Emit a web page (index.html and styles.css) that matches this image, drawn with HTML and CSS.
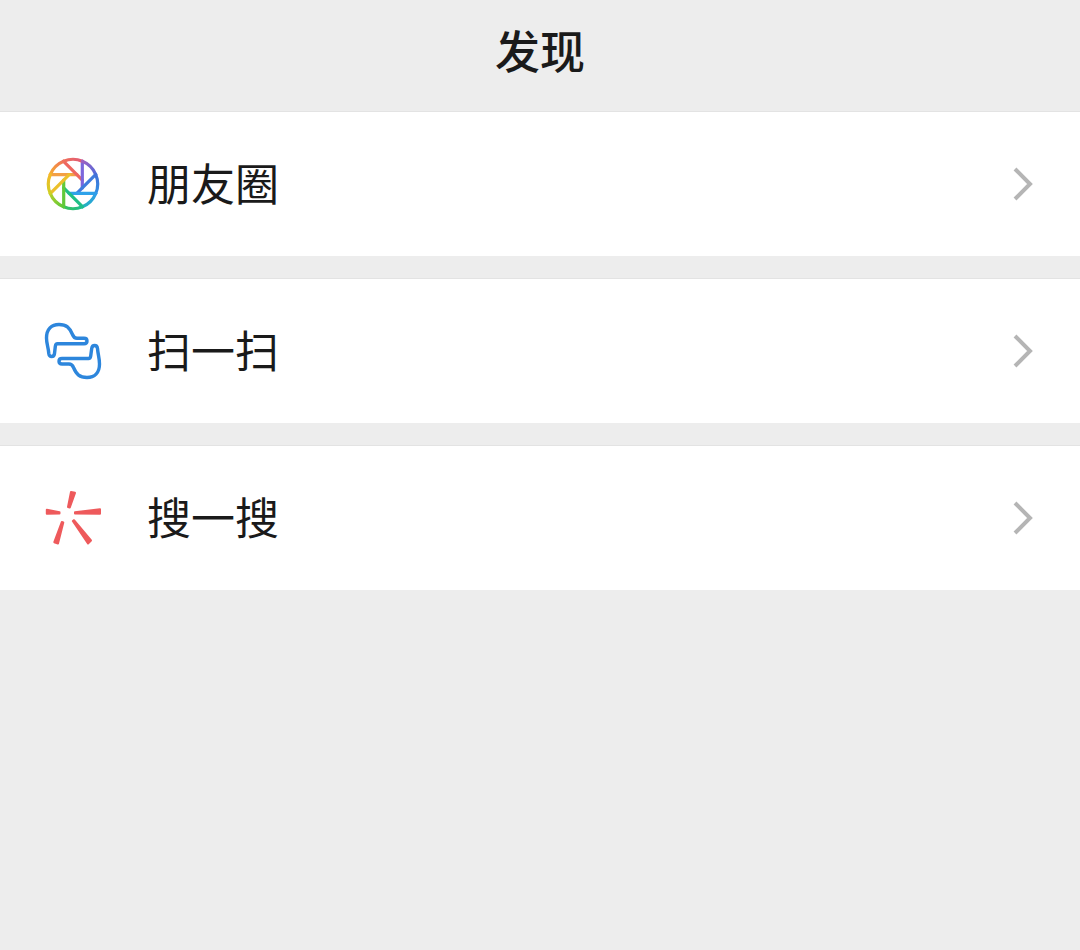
FILE: index.html
```html
<!doctype html>
<html lang="zh-CN">
<head>
    <meta charset="utf-8">
    <meta name="viewport" content="width=device-width">
    <title>发现</title>
    <link rel="stylesheet" href="styles.css">
</head>
<body>
    <header class="title_bar">
        <h1>发现</h1>
    </header>

    <main class="menu">
        <a class="item" href="#moments">
            <svg class="icon" viewBox="-35 -35 70 70" aria-hidden="true">
                <defs>
                    <linearGradient id="g0" gradientUnits="userSpaceOnUse" x1="-23" y1="-9" x2="-9" y2="-23"><stop stop-color="#f5b02e"/><stop offset="1" stop-color="#f0705a"/></linearGradient>
                    <linearGradient id="g1" gradientUnits="userSpaceOnUse" x1="-23" y1="-9" x2="-9" y2="-23"><stop stop-color="#f0705a"/><stop offset="1" stop-color="#e05a78"/></linearGradient>
                    <linearGradient id="g2" gradientUnits="userSpaceOnUse" x1="-23" y1="-9" x2="-9" y2="-23"><stop stop-color="#a060c0"/><stop offset="1" stop-color="#4f6cdc"/></linearGradient>
                    <linearGradient id="g3" gradientUnits="userSpaceOnUse" x1="-23" y1="-9" x2="-9" y2="-23"><stop stop-color="#4470d6"/><stop offset="1" stop-color="#2f90e4"/></linearGradient>
                    <linearGradient id="g4" gradientUnits="userSpaceOnUse" x1="-23" y1="-9" x2="-9" y2="-23"><stop stop-color="#2f9cec"/><stop offset="1" stop-color="#22b4b8"/></linearGradient>
                    <linearGradient id="g5" gradientUnits="userSpaceOnUse" x1="-23" y1="-9" x2="-9" y2="-23"><stop stop-color="#1cbc90"/><stop offset="1" stop-color="#3cc258"/></linearGradient>
                    <linearGradient id="g6" gradientUnits="userSpaceOnUse" x1="-23" y1="-9" x2="-9" y2="-23"><stop stop-color="#58c838"/><stop offset="1" stop-color="#b8d02a"/></linearGradient>
                    <linearGradient id="g7" gradientUnits="userSpaceOnUse" x1="-23" y1="-9" x2="-9" y2="-23"><stop stop-color="#cfd024"/><stop offset="1" stop-color="#f5b82a"/></linearGradient>
                    <path id="arc" d="M-22.8 -9.4A24.6 24.6 0 0 1 -9.4 -22.8"/>
                    <path id="blade" d="M-22.6 -9.3H3.9"/>
                </defs>
                <g fill="none" stroke-width="3.2" stroke-linecap="round">
                    <use href="#blade" stroke="#f3a045"/>
                    <use href="#blade" stroke="#ee6660" transform="rotate(45)"/>
                    <use href="#blade" stroke="#7b66dc" transform="rotate(90)"/>
                    <use href="#blade" stroke="#3f7cdc" transform="rotate(135)"/>
                    <use href="#blade" stroke="#2ea2ea" transform="rotate(180)"/>
                    <use href="#blade" stroke="#20bf86" transform="rotate(225)"/>
                    <use href="#blade" stroke="#62c93a" transform="rotate(270)"/>
                    <use href="#blade" stroke="#ecc02c" transform="rotate(315)"/>
                    <use href="#arc" stroke="url(#g0)"/>
                    <use href="#arc" stroke="url(#g1)" transform="rotate(45)"/>
                    <use href="#arc" stroke="url(#g2)" transform="rotate(90)"/>
                    <use href="#arc" stroke="url(#g3)" transform="rotate(135)"/>
                    <use href="#arc" stroke="url(#g4)" transform="rotate(180)"/>
                    <use href="#arc" stroke="url(#g5)" transform="rotate(225)"/>
                    <use href="#arc" stroke="url(#g6)" transform="rotate(270)"/>
                    <use href="#arc" stroke="url(#g7)" transform="rotate(315)"/>
                </g>
            </svg>
            <span class="label">朋友圈</span>
            <svg class="arrow" viewBox="0 0 20 36" aria-hidden="true"><path d="M2 3L17 18L2 33"/></svg>
        </a>

        <a class="item" href="#scan">
            <svg class="icon scan" viewBox="0 0 70 70" aria-hidden="true">
                <path d="M10.800 37.500C10.300 31 8.500 28 8.500 22C8.500 13 13.500 8.500 21 8.500C28.500 8.500 31.500 11.500 34.500 18.500C35.500 21 36.500 22.300 39 22.300H46C50 22.300 50 27.800 46 27.800H19.500C18 27.800 17.500 29 17.300 30.500L16.500 37.500C16 41.500 11.300 41.500 10.800 37.500Z"/>
                <path d="M59.500 32.500C60 39 61.500 42 61.500 48C61.500 57 56.500 61.500 49 61.500C41.500 61.500 38.500 58.500 35.500 51.500C34.500 49 33.500 48 31 48H24C20 48 20 42.500 24 42.500H50.500C52 42.500 52.500 41.500 52.700 40L53.700 32.500C54.300 28.500 59 28.500 59.500 32.500Z"/>
            </svg>
            <span class="label">扫一扫</span>
            <svg class="arrow" viewBox="0 0 20 36" aria-hidden="true"><path d="M2 3L17 18L2 33"/></svg>
        </a>

        <a class="item" href="#search">
            <svg class="icon search" viewBox="0 -1 70 70" aria-hidden="true">
                <path d="M33 8L37 8.800L31.800 23.500L30 23Z"/>
                <path d="M8.800 25.800V29.800L21.500 29.600V28.200Z"/>
                <path d="M62 25.200V29.800L37 29.600V28.200Z"/>
                <path d="M23.800 38L25.300 38.500L20 59.500L16.300 58.200Z"/>
                <path d="M34.800 37L36 36.200L53 56.500L50 59.500Z"/>
            </svg>
            <span class="label">搜一搜</span>
            <svg class="arrow" viewBox="0 0 20 36" aria-hidden="true"><path d="M2 3L17 18L2 33"/></svg>
        </a>
    </main>
</body>
</html>
```

FILE: styles.css
```css
body{
    margin:0;
    background-color:#ededed;
    color:#1a1a1a;
    font-family:"Noto Sans CJK SC", sans-serif;
}
.title_bar{
    padding:18px 0 29px;
    text-align:center;
}
.title_bar h1{
    margin:0;
    font-size:45px;
    font-weight:500;
    line-height:64px;
}
.menu{
    display:flex;
    flex-direction:column;
    gap:22px;
}
.item{
    display:flex;
    align-items:center;
    height:144px;
    padding:0 47px 0 38px;
    border-top:1px solid #e3e3e3;
    background-color:#fff;
    color:inherit;
    text-decoration:none;
}
.icon{
    width:70px;
    height:70px;
    flex-shrink:0;
}
.scan{
    fill:none;
    stroke:#2d86dc;
    stroke-width:3.4;
    stroke-linejoin:round;
}
.search{
    fill:#ee5a5c;
    stroke:#ee5a5c;
    stroke-width:2;
    stroke-linejoin:round;
}
.label{
    flex:1;
    margin-left:39px;
    padding-bottom:4px;
    font-size:44px;
    line-height:64px;
}
.arrow{
    width:20px;
    height:36px;
    fill:none;
    stroke:#b5b5b5;
    stroke-width:4;
}
```
